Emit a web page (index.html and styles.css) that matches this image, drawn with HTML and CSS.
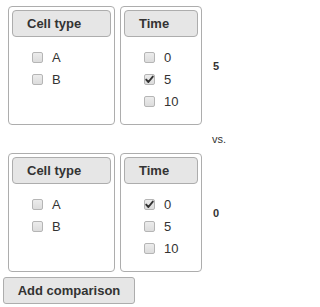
FILE: index.html
```html
<!DOCTYPE html>
<html>
<head>
<meta charset="utf-8">
<link rel="stylesheet" href="styles.css">
</head>
<body>
<div class="page">
  <div class="comp">
    <div class="box b1">
      <div class="hdr">Cell type</div>
      <div class="opts">
        <label class="opt"><span class="cb"></span>A</label>
        <label class="opt"><span class="cb"></span>B</label>
      </div>
    </div>
    <div class="box b2">
      <div class="hdr">Time</div>
      <div class="opts">
        <label class="opt"><span class="cb"></span>0</label>
        <label class="opt"><span class="cb on"><svg viewBox="0 0 11 11" width="11" height="11"><path d="M2.2 5.6 L4.4 8 L8.8 2.6" fill="none" stroke="#333" stroke-width="1.9" stroke-linecap="round" stroke-linejoin="round"/></svg></span>5</label>
        <label class="opt"><span class="cb"></span>10</label>
      </div>
    </div>
    <div class="val">5</div>
  </div>
  <div class="vs">vs.</div>
  <div class="comp">
    <div class="box b1">
      <div class="hdr">Cell type</div>
      <div class="opts">
        <label class="opt"><span class="cb"></span>A</label>
        <label class="opt"><span class="cb"></span>B</label>
      </div>
    </div>
    <div class="box b2">
      <div class="hdr">Time</div>
      <div class="opts">
        <label class="opt"><span class="cb on"><svg viewBox="0 0 11 11" width="11" height="11"><path d="M2.2 5.6 L4.4 8 L8.8 2.6" fill="none" stroke="#333" stroke-width="1.9" stroke-linecap="round" stroke-linejoin="round"/></svg></span>0</label>
        <label class="opt"><span class="cb"></span>5</label>
        <label class="opt"><span class="cb"></span>10</label>
      </div>
    </div>
    <div class="val">0</div>
  </div>
  <button class="add">Add comparison</button>
</div>
</body>
</html>
```
FILE: styles.css
```css
html, body {
  margin: 0;
  padding: 0;
  background: #fff;
}
.page {
  padding: 6px 0 0 3px;
  font-family: "Liberation Sans", Arial, sans-serif;
  color: #333;
}
.comp {
  display: flex;
  align-items: center;
  gap: 5px;
  margin-left: 5px;
}
.box {
  box-sizing: border-box;
  height: 119px;
  border: 1px solid #adadad;
  border-radius: 4px;
  padding: 3px;
}
.b1 { width: 107px; }
.b2 { width: 82px; }
.hdr {
  box-sizing: border-box;
  height: 27px;
  line-height: 25px;
  border: 1px solid #adadad;
  border-radius: 4px;
  background: #e6e6e6;
  font-size: 13px;
  font-weight: bold;
  padding-left: 14px;
  color: #333;
}
.opts {
  display: flex;
  flex-direction: column;
  margin-top: 9px;
  padding-left: 20px;
}
.opt {
  display: flex;
  align-items: center;
  gap: 9px;
  height: 22px;
  font-size: 13px;
  color: #333;
}
.cb {
  box-sizing: border-box;
  width: 11px;
  height: 11px;
  border: 1px solid #b5b5b5;
  border-radius: 2px;
  background: linear-gradient(#ececec, #dcdcdc);
  display: flex;
  align-items: center;
  justify-content: center;
  position: relative;
}
.cb svg {
  position: absolute;
  left: -1px;
  top: -1px;
}
.val {
  margin-left: 6px;
  font-size: 11px;
  font-weight: bold;
  color: #333;
}
.vs {
  margin: 8px 0 7px 209px;
  font-size: 11px;
  line-height: 13px;
  color: #333;
}
.add {
  display: block;
  margin-top: 5px;
  width: 132px;
  height: 27px;
  border: 1px solid #adadad;
  border-radius: 3px;
  background: #e6e6e6;
  font-family: "Liberation Sans", Arial, sans-serif;
  font-size: 13px;
  font-weight: bold;
  color: #333;
  padding: 0;
}
```
